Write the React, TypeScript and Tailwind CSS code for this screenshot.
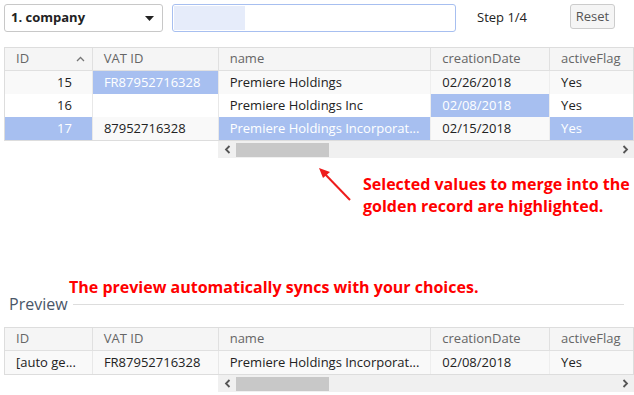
import React from "react";

const font = { fontFamily: "'Open Sans', 'Liberation Sans', sans-serif" };

const cols = [
  { key: "id", label: "ID", w: "w-[88px]" },
  { key: "vat", label: "VAT ID", w: "w-[126px]" },
  { key: "name", label: "name", w: "w-[213px]" },
  { key: "date", label: "creationDate", w: "w-[119px]" },
  { key: "flag", label: "activeFlag", w: "w-[83px]" },
];

type Cell = { text: string; hl?: boolean; right?: boolean };

const rows: Cell[][] = [
  [
    { text: "15", right: true },
    { text: "FR87952716328", hl: true },
    { text: "Premiere Holdings" },
    { text: "02/26/2018" },
    { text: "Yes" },
  ],
  [
    { text: "16", right: true },
    { text: "" },
    { text: "Premiere Holdings Inc" },
    { text: "02/08/2018", hl: true },
    { text: "Yes" },
  ],
  [
    { text: "17", right: true, hl: true },
    { text: "87952716328" },
    { text: "Premiere Holdings Incorporat...", hl: true },
    { text: "02/15/2018" },
    { text: "Yes", hl: true },
  ],
];

const previewRow: Cell[] = [
  { text: "[auto ge..." },
  { text: "FR87952716328" },
  { text: "Premiere Holdings Incorporat..." },
  { text: "02/08/2018" },
  { text: "Yes" },
];

function Header({ sort }: { sort?: boolean }) {
  return (
    <div className="flex h-[23px] bg-[#f5f5f5] border-b border-[#e0e0e0]">
      {cols.map((c, i) => (
        <div
          key={c.key}
          className={`${c.w} flex items-center justify-between text-[13px] text-[#666] ${i === 0 ? "pl-[11px] pr-[7px]" : "px-[11px]"} ${i < cols.length - 1 ? "border-r border-[#e0e0e0]" : ""}`}
        >
          <span>{c.label}</span>
          {sort && i === 0 && (
            <svg width="9" height="6" viewBox="0 0 9 6">
              <path d="M1 5 L4.5 1.5 L8 5" fill="none" stroke="#777" strokeWidth="1.3" />
            </svg>
          )}
        </div>
      ))}
    </div>
  );
}

function Row({ cells, striped }: { cells: Cell[]; striped?: boolean }) {
  return (
    <div className={`flex h-[23px] ${striped ? "bg-[#f9f9f9]" : "bg-white"}`}>
      {cells.map((cell, i) => (
        <div
          key={i}
          className={`${cols[i].w} flex items-center whitespace-nowrap overflow-hidden text-[13px] ${cell.right ? "justify-end pr-[20px]" : "px-[11px]"} ${cell.hl ? "bg-[#a7bff0] text-white" : "text-[#222]"} ${i < 2 ? "border-r border-[#e8e8e8]" : i < 4 ? "border-r border-[#eeeeee]" : ""}`}
        >
          {cell.text}
        </div>
      ))}
    </div>
  );
}

function ScrollBar() {
  return (
    <div className="flex ml-[214px] h-[17px] bg-[#f0f0f0] items-center">
      <div className="w-[18px] flex justify-center">
        <svg width="7" height="9" viewBox="0 0 7 9">
          <path d="M5.5 1 L2 4.5 L5.5 8" fill="none" stroke="#555" strokeWidth="1.8" />
        </svg>
      </div>
      <div className="w-[93px] h-[14px] bg-[#c8c8c8]" />
      <div className="flex-1" />
      <div className="w-[18px] flex justify-center">
        <svg width="7" height="9" viewBox="0 0 7 9">
          <path d="M1.5 1 L5 4.5 L1.5 8" fill="none" stroke="#555" strokeWidth="1.8" />
        </svg>
      </div>
    </div>
  );
}

export default function App() {
  return (
    <div className="w-[634px] h-[395px] bg-white overflow-hidden" style={font}>
      {/* Top bar */}
      <div className="flex items-center pt-[4px] pl-[4px] h-[32px]">
        <div className="w-[159px] h-[28px] border border-[#c8c8c8] rounded-[3px] flex items-center justify-between pl-[6px] pr-[8px]">
          <span className="text-[13px] font-bold text-[#222]">1. company</span>
          <svg width="9" height="5" viewBox="0 0 9 5">
            <path d="M0 0 H9 L4.5 5 Z" fill="#222" />
          </svg>
        </div>
        <div className="ml-[9px] w-[284px] h-[28px] border border-[#a7bff0] rounded-[3px] p-px">
          <div className="w-[71px] h-full bg-[#e6ecfa]" />
        </div>
        <span className="ml-[21px] text-[13px] text-[#222]">Step 1/4</span>
        <button className="ml-[43px] w-[45px] h-[25px] border border-[#cccccc] rounded-[3px] bg-[#f5f5f5] text-[13px] text-[#555] -mt-[3px]">
          Reset
        </button>
      </div>

      {/* Source records table */}
      <div className="ml-[4px] mt-[15px] w-[630px]">
        <div className="border border-[#dddddd] overflow-hidden">
          <Header sort />
          {rows.map((r, i) => (
            <Row key={i} cells={r} striped={i !== 1} />
          ))}
        </div>
        <ScrollBar />
      </div>

      {/* Annotation */}
      <div className="flex mt-[6px] h-[55px]">
        <svg className="ml-[316px] mt-[2px]" width="40" height="40" viewBox="0 0 40 40">
          <line x1="34" y1="34" x2="7" y2="6" stroke="#ee1c1c" strokeWidth="2" />
          <path d="M3 2 L14 6 L7 12 Z" fill="#ee1c1c" />
        </svg>
        <div className="ml-[7px] mt-[9px] text-[16px] font-bold text-[#ff0000] leading-[22px] whitespace-nowrap">
          Selected values to merge into the
          <br />
          golden record are highlighted.
        </div>
      </div>

      {/* Preview */}
      <div className="mt-[58px] pl-[69px] text-[16px] font-bold text-[#ff0000] leading-[20px]">
        The preview automatically syncs with your choices.
      </div>
      <div className="flex items-center pl-[9px] pr-[10px] h-[20px] -mt-[3px]">
        <span className="text-[16px] text-[#4a5668]">Preview</span>
        <div className="flex-1 ml-[5px] h-px bg-[#dddddd]" />
      </div>
      <div className="ml-[4px] mt-[13px] w-[630px]">
        <div className="border border-[#dddddd] overflow-hidden">
          <Header />
          <Row cells={previewRow} striped />
        </div>
        <ScrollBar />
      </div>
    </div>
  );
}
